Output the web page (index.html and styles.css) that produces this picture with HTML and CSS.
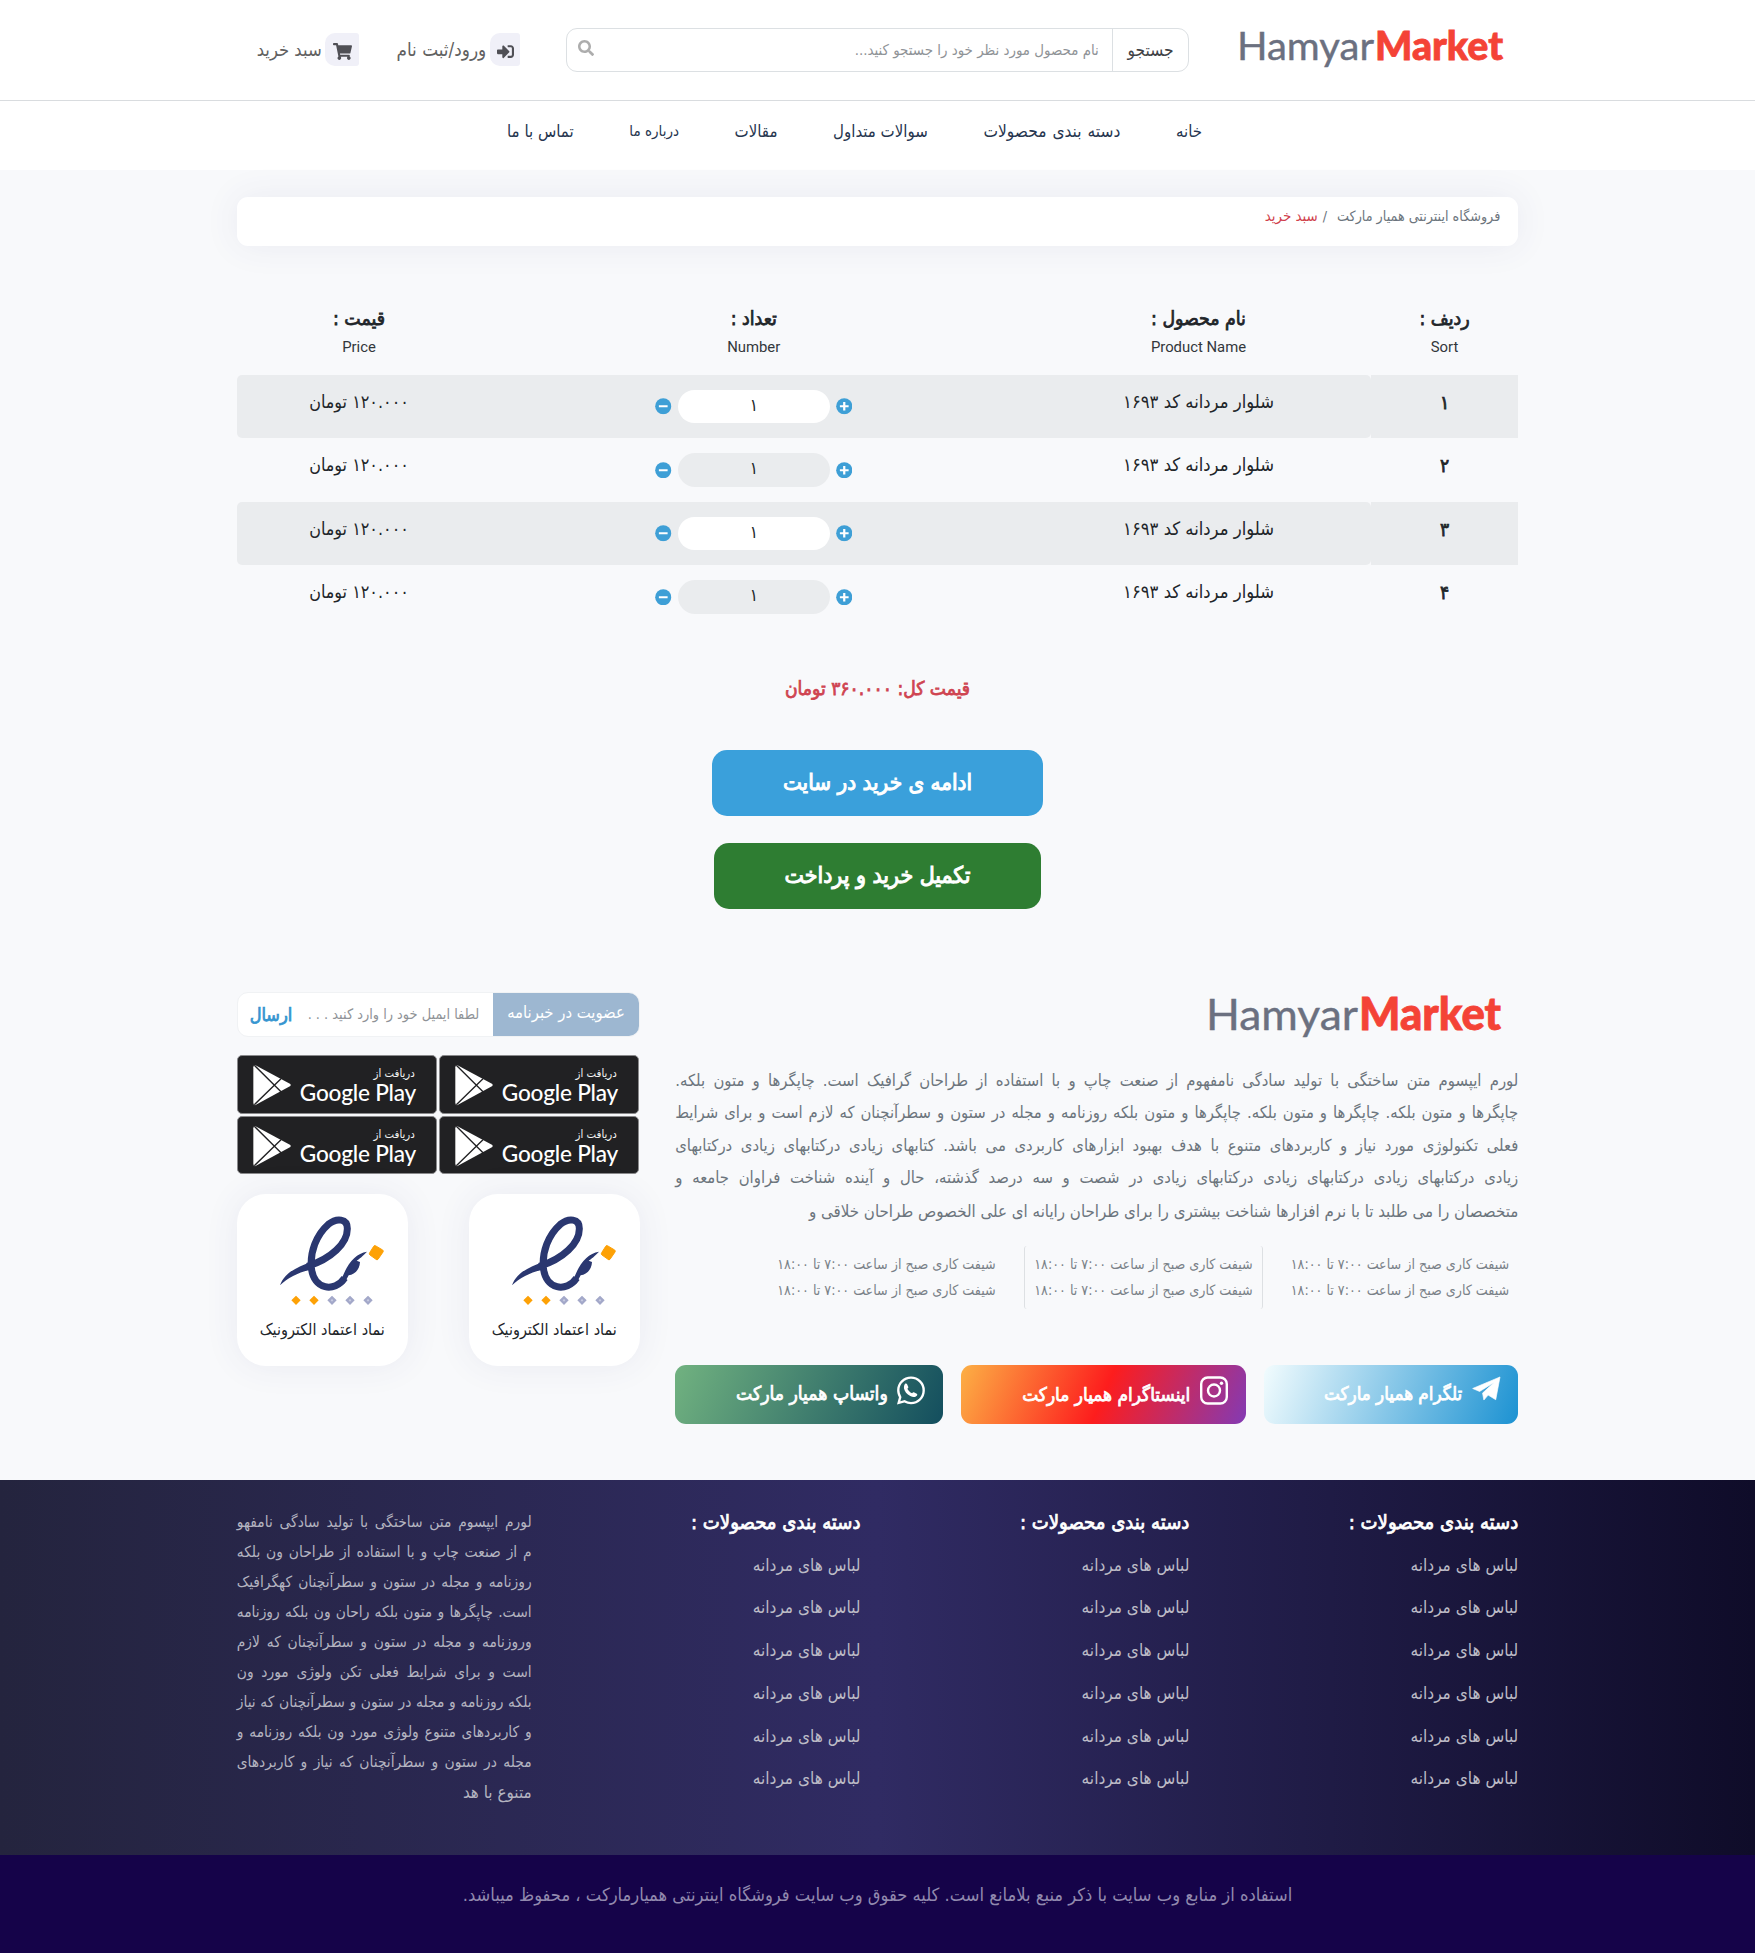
FILE: index.html
```html
<!DOCTYPE html>
<html lang="fa" dir="rtl">
<head>
<meta charset="utf-8">
<title>HamyarMarket</title>
<link rel="stylesheet" href="styles.css">
</head>
<body>
<svg class="sprite" width="0" height="0" aria-hidden="true">
  <symbol id="plus" viewBox="0 0 17 17"><circle cx="8.500" cy="8.500" r="8.300" fill="#3e9fd6"/><path d="M8.500 4v9M4 8.500h9" stroke="#fff" stroke-width="2.300"/></symbol>
  <symbol id="minus" viewBox="0 0 17 17"><circle cx="8.500" cy="8.500" r="8.300" fill="#3e9fd6"/><path d="M4 8.500h9" stroke="#fff" stroke-width="2.300"/></symbol>
  <symbol id="play" viewBox="0 0 114 126"><path d="M6 3Q1 4 1 10V116Q1 122 6 124L112 66Q114 63 112 60Z" fill="#fff"/><path d="M4 4L84 83M4 122L84 44" stroke="#212123" stroke-width="4" fill="none"/></symbol>
  <symbol id="enamad" viewBox="180 740 320 270">
    <g fill="#2a3770"><path d="M180 948C196 904 240 892 272 877L284 898C246 905 206 922 180 948Z"/><path d="M362 938C378 888 404 852 441 847C426 862 419 868 410 874L420 878C419 902 404 915 386 918L372 944Z"/></g>
    <path d="M262 891C334 868 382 822 382 778C382 747 350 745 325 765C288 797 270 850 274 894C280 962 344 970 374 926" fill="none" stroke="#2a3770" stroke-width="21"/>
    <path d="M466 829L488 842Q491 845 489 848L474 870Q471 873 468 870L450 857Q446 854 449 850L461 831Q463 827 466 829Z" fill="#fda106" stroke="#fda106" stroke-width="3"/>
    <path d="M228 979l14 14-14 14-14-14zM282 979l14 14-14 14-14-14z" fill="#fda106"/>
    <path d="M336 979l14 14-14 14-14-14zM390 979l14 14-14 14-14-14zM444 979l14 14-14 14-14-14z" fill="#a3a8c9"/>
    <path d="M336 989l4 4-4 4-4-4zM390 989l4 4-4 4-4-4zM444 989l4 4-4 4-4-4z" fill="#c9cce2"/>
  </symbol>
</svg>

<header class="top">
  <div class="wrap top-row">
    <svg class="logo" viewBox="0 0 264 50" role="img"><text x="-3" y="35" class="logo-a" textLength="137" lengthAdjust="spacingAndGlyphs">Hamyar</text><text x="135" y="35" class="logo-b" textLength="128" lengthAdjust="spacingAndGlyphs">Market</text></svg>
    <div class="search">
      <span class="search-btn">جستجو</span>
      <span class="search-input">نام محصول مورد نظر خود را جستجو کنید...</span>
      <svg class="ic-search" viewBox="0 0 512 512"><path fill="#adadad" d="M505 442.700L405.300 343c-4.500-4.500-10.600-7-17-7H372c27.600-35.300 44-79.700 44-128C416 93.100 322.900 0 208 0S0 93.100 0 208s93.100 208 208 208c48.300 0 92.700-16.400 128-44v16.300c0 6.400 2.500 12.500 7 17l99.700 99.700c9.400 9.400 24.600 9.400 33.900 0l28.300-28.300c9.400-9.400 9.400-24.600.1-34zM208 336c-70.700 0-128-57.200-128-128 0-70.700 57.200-128 128-128 70.700 0 128 57.200 128 128 0 70.700-57.200 128-128 128z"/></svg>
    </div>
    <a class="action login"><span class="chip"><svg width="17" height="17" viewBox="0 0 512 512"><path fill="#4f4f55" d="M416 448h-84c-6.600 0-12-5.400-12-12v-40c0-6.600 5.400-12 12-12h84c17.700 0 32-14.300 32-32V160c0-17.700-14.300-32-32-32h-84c-6.600 0-12-5.400-12-12V76c0-6.600 5.400-12 12-12h84c53 0 96 43 96 96v192c0 53-43 96-96 96zm-47-201L201 79c-15-15-41-4.500-41 17v96H24c-13.300 0-24 10.700-24 24v96c0 13.300 10.700 24 24 24h136v96c0 21.500 26 32 41 17l168-168c9.300-9.400 9.300-24.600 0-34z"/></svg></span><span class="action-text">ورود/ثبت نام</span></a>
    <a class="action cart"><span class="chip chip-cart"><svg width="19" height="17" viewBox="0 0 576 512"><path fill="#4f4f55" d="M528.120 301.319l47.273-208C578.806 78.301 567.391 64 551.990 64H159.208l-9.166-44.810C147.758 8.021 137.930 0 126.529 0H24C10.745 0 0 10.745 0 24v16c0 13.255 10.745 24 24 24h69.883l70.248 343.435C147.325 417.100 136 435.222 136 456c0 30.928 25.072 56 56 56s56-25.072 56-56c0-15.674-6.447-29.835-16.824-40h209.647C430.447 426.165 424 440.326 424 456c0 30.928 25.072 56 56 56s56-25.072 56-56c0-22.172-12.888-41.332-31.579-50.405l5.517-24.276c3.413-15.018-8.002-29.319-23.403-29.319H218.117l-6.545-32h293.145c11.206 0 20.920-7.754 23.403-18.681z"/></svg></span><span class="action-text">سبد خرید</span></a>
  </div>
</header>
<nav class="nav"><a>خانه</a><a>دسته بندی محصولات</a><a>سوالات متداول</a><a>مقالات</a><a>درباره ما</a><a>تماس با ما</a></nav>

<main class="wrap">
  <div class="crumbs"><span>فروشگاه اینترنتی همیار مارکت</span><i>/</i><b>سبد خرید</b></div>

  <table class="basket">
    <thead><tr>
      <th class="c1">ردیف :<small>Sort</small></th><th class="c2">نام محصول :<small>Product Name</small></th><th class="c3">تعداد :<small>Number</small></th><th class="c4">قیمت :<small>Price</small></th>
    </tr></thead>
    <tbody>
      <tr class="odd"><td class="num">۱</td><td>شلوار مردانه کد ۱۶۹۳</td><td><div class="qty"><svg><use href="#plus"/></svg><span>۱</span><svg><use href="#minus"/></svg></div></td><td class="price">۱۲۰.۰۰۰ تومان</td></tr>
      <tr><td class="num">۲</td><td>شلوار مردانه کد ۱۶۹۳</td><td><div class="qty"><svg><use href="#plus"/></svg><span>۱</span><svg><use href="#minus"/></svg></div></td><td class="price">۱۲۰.۰۰۰ تومان</td></tr>
      <tr class="odd"><td class="num">۳</td><td>شلوار مردانه کد ۱۶۹۳</td><td><div class="qty"><svg><use href="#plus"/></svg><span>۱</span><svg><use href="#minus"/></svg></div></td><td class="price">۱۲۰.۰۰۰ تومان</td></tr>
      <tr><td class="num">۴</td><td>شلوار مردانه کد ۱۶۹۳</td><td><div class="qty"><svg><use href="#plus"/></svg><span>۱</span><svg><use href="#minus"/></svg></div></td><td class="price">۱۲۰.۰۰۰ تومان</td></tr>
    </tbody>
  </table>

  <p class="total">قیمت کل: ۳۶۰.۰۰۰ تومان</p>
  <div class="buttons"><a class="btn btn-blue">ادامه ی خرید در سایت</a><a class="btn btn-green">تکمیل خرید و پرداخت</a></div>

  <section class="about">
    <div class="about-main">
      <svg class="logo2" viewBox="0 0 293 53" role="img"><text x="-2" y="38" class="logo-a" textLength="152" lengthAdjust="spacingAndGlyphs">Hamyar</text><text x="151" y="38" class="logo-b" textLength="142" lengthAdjust="spacingAndGlyphs">Market</text></svg>
      <div class="lorem">
        <p>لورم ایپسوم متن ساختگی با تولید سادگی نامفهوم از صنعت چاپ و با استفاده از طراحان گرافیک است. چاپگرها و متون بلکه.</p>
        <p>چاپگرها و متون بلکه. چاپگرها و متون بلکه. چاپگرها و متون بلکه روزنامه و مجله در ستون و سطرآنچنان که لازم است و برای شرایط</p>
        <p>فعلی تکنولوژی مورد نیاز و کاربردهای متنوع با هدف بهبود ابزارهای کاربردی می باشد. کتابهای زیادی درکتابهای زیادی درکتابهای</p>
        <p>زیادی درکتابهای زیادی درکتابهای زیادی درکتابهای زیادی در شصت و سه درصد گذشته، حال و آینده شناخت فراوان جامعه و</p>
        <p>متخصصان را می طلبد تا با نرم افزارها شناخت بیشتری را برای طراحان رایانه ای علی الخصوص طراحان خلاقی و</p>
      </div>
      <div class="shifts">
        <div><p>شیفت کاری صبح از ساعت ۷:۰۰ تا ۱۸:۰۰</p><p>شیفت کاری صبح از ساعت ۷:۰۰ تا ۱۸:۰۰</p></div>
        <div><p>شیفت کاری صبح از ساعت ۷:۰۰ تا ۱۸:۰۰</p><p>شیفت کاری صبح از ساعت ۷:۰۰ تا ۱۸:۰۰</p></div>
        <div><p>شیفت کاری صبح از ساعت ۷:۰۰ تا ۱۸:۰۰</p><p>شیفت کاری صبح از ساعت ۷:۰۰ تا ۱۸:۰۰</p></div>
      </div>
      <div class="social">
        <a class="tg"><svg width="29" height="25" viewBox="1115 445 88 74"><path fill="#fff" stroke="#fff" stroke-width="2" stroke-linejoin="round" d="M1117 482L1200 447L1187 516L1164 502L1151 517L1147 496L1182 464L1138 491Z"/></svg><span>تلگرام همیار مارکت</span></a>
        <a class="ig"><svg width="28" height="29" viewBox="0 0 28 29" fill="none" stroke="#fff" stroke-width="2.400"><rect x="1.200" y="1.500" width="25.600" height="26" rx="6.500"/><circle cx="14" cy="14.500" r="6"/><circle cx="21.500" cy="7.200" r="1.700" fill="#fff" stroke="none"/></svg><span>اینستاگرام همیار مارکت</span></a>
        <a class="wa"><svg width="28" height="29" viewBox="0 0 16 16"><path fill="#fff" d="M13.601 2.326A7.854 7.854 0 0 0 7.994 0C3.627 0 .068 3.558.064 7.926c0 1.399.366 2.760 1.057 3.965L0 16l4.204-1.102a7.933 7.933 0 0 0 3.790.965h.004c4.368 0 7.926-3.558 7.930-7.930A7.898 7.898 0 0 0 13.600 2.326zM7.994 14.521a6.573 6.573 0 0 1-3.356-.920l-.240-.144-2.494.654.666-2.433-.156-.251a6.560 6.560 0 0 1-1.007-3.505c0-3.626 2.957-6.584 6.591-6.584a6.560 6.560 0 0 1 4.660 1.931 6.557 6.557 0 0 1 1.928 4.660c-.004 3.639-2.961 6.592-6.592 6.592z"/><path fill="#fff" d="M4.600 4.200c.4-.4.9-.3 1.100.1l.7 1.500c.2.400 0 .7-.5 1.200.5 1.100 1.500 2 2.700 2.600.5-.6.8-.8 1.300-.5l1.400.8c.4.300.4.700 0 1.100-.8.9-2.100 1-3.700.2-2-1.100-3.300-2.800-3.600-4.400-.1-1 .1-2 .6-2.600z"/></svg><span>واتساپ همیار مارکت</span></a>
      </div>
    </div>

    <aside class="side">
      <div class="news"><span class="news-label">عضویت در خبرنامه</span><span class="news-input">لطفا ایمیل خود را وارد کنید . . .</span><b>ارسال</b></div>
      <div class="stores">
        <a><svg class="tri"><use href="#play"/></svg><span class="st"><small>دریافت از</small><em>Google Play</em></span></a>
        <a><svg class="tri"><use href="#play"/></svg><span class="st"><small>دریافت از</small><em>Google Play</em></span></a>
        <a><svg class="tri"><use href="#play"/></svg><span class="st"><small>دریافت از</small><em>Google Play</em></span></a>
        <a><svg class="tri"><use href="#play"/></svg><span class="st"><small>دریافت از</small><em>Google Play</em></span></a>
      </div>
      <div class="trust">
        <div><svg><use href="#enamad"/></svg><p>نماد اعتماد الکترونیک</p></div>
        <div><svg><use href="#enamad"/></svg><p>نماد اعتماد الکترونیک</p></div>
      </div>
    </aside>
  </section>
</main>

<footer class="foot">
  <div class="wrap foot-row">
    <ul><li class="h">دسته بندی محصولات :</li><li>لباس های مردانه</li><li>لباس های مردانه</li><li>لباس های مردانه</li><li>لباس های مردانه</li><li>لباس های مردانه</li><li>لباس های مردانه</li></ul>
    <ul><li class="h">دسته بندی محصولات :</li><li>لباس های مردانه</li><li>لباس های مردانه</li><li>لباس های مردانه</li><li>لباس های مردانه</li><li>لباس های مردانه</li><li>لباس های مردانه</li></ul>
    <ul><li class="h">دسته بندی محصولات :</li><li>لباس های مردانه</li><li>لباس های مردانه</li><li>لباس های مردانه</li><li>لباس های مردانه</li><li>لباس های مردانه</li><li>لباس های مردانه</li></ul>
    <div class="foot-text">
      <p>لورم ایپسوم متن ساختگی با تولید سادگی نامفهو</p><p>م از صنعت چاپ و با استفاده از طراحان ون بلکه</p><p>روزنامه و مجله در ستون و سطرآنچنان کهگرافیک</p><p>است. چاپگرها و متون بلکه راحان ون بلکه روزنامه</p><p>وروزنامه و مجله در ستون و سطرآنچنان که لازم</p><p>است و برای شرایط فعلی تکن ولوژی مورد ون</p><p>بلکه روزنامه و مجله در ستون و سطرآنچنان که نیاز</p><p>و کاربردهای متنوع ولوژی مورد ون بلکه روزنامه و</p><p>مجله در ستون و سطرآنچنان که نیاز و کاربردهای</p><p>متنوع با هد</p>
    </div>
  </div>
</footer>
<div class="copy">استفاده از منابع وب سایت با ذکر منبع بلامانع است. کلیه حقوق وب سایت فروشگاه اینترنتی همیارمارکت ، محفوظ میباشد.</div>
</body>
</html>
```
FILE: styles.css
```css
* { box-sizing: border-box; }
body, p, ul { margin: 0; padding: 0; }
body {
  background: #f8f9fb;
  color: #212529;
  font-family: "DejaVu Sans Condensed", "DejaVu Sans", sans-serif;
  font-size: 16px;
  white-space: nowrap;
}
ul { list-style: none; }
svg { flex: none; display: block; direction: ltr; }
.sprite { position: absolute; }
.wrap { width: 1281.500px; margin: 0 auto; }

/* semi-bold headings: regular weight with a thin outline */
th, .num, .total, .btn, .social span, .foot .h, .news b {
  font-weight: 400;
  -webkit-text-stroke: .75px currentColor;
}

/* header */
.top { background: #fff; height: 100.500px; border-bottom: 1px solid #d9dcdf; }
.top-row { display: flex; align-items: flex-start; height: 99px; }
.logo { width: 264px; height: 50px; margin: 24.500px 14px 0 51px; overflow: visible; }
.logo-a { font: 400 39.500px Lato, sans-serif; fill: #6b7080; stroke: #6b7080; stroke-width: .4px; }
.logo-b { font: 900 40.500px Lato, sans-serif; fill: #f44336; stroke: #f44336; stroke-width: .8px; }
.search {
  width: 623.500px; height: 44px; margin-top: 28px;
  display: flex; align-items: center;
  border: 1.500px solid #dce0e3; border-radius: 11px;
}
.search-btn {
  width: 76.500px; height: 100%; line-height: 43px; text-align: center;
  border-left: 1px solid #dce0e3; color: #3f4246; font-size: 17.200px;
}
.search-input { flex: 1; padding-right: 13px; font-size: 14.900px; color: #8f9397; }
.ic-search { width: 16px; height: 16px; margin: 0 0 4px 11px; }
.action { display: flex; align-items: center; margin-top: 33px; height: 33px; color: #616161; }
.login { margin-right: 45.500px; }
.cart { margin-right: 36px; }
.chip {
  width: 30px; height: 33px; background: #f0f0f8; border-radius: 10px 3px 3px 10px;
  display: flex; align-items: center; justify-content: center; padding-top: 3px;
}
.chip-cart { width: 34px; }
.action-text { font-size: 18.300px; margin-right: 3.500px; }
.login .action-text { width: 91px; margin-right: 4px; font-size: 18.800px; }

/* navigation */
.nav {
  height: 69px; background: #fff; padding: 0 553px 9px 507px;
  display: flex; justify-content: space-between; align-items: center;
  color: #27364f; font-size: 16.700px;
}
.nav a:nth-child(2) { font-size: 17.200px; word-spacing: 1px; }
.nav a:nth-child(5) { font-size: 15px; }

/* breadcrumb */
.crumbs {
  height: 49px; margin: 27.500px 0 38px; padding: 5px 18px 0 0; line-height: 28px;
  background: #fff; border-radius: 11px; box-shadow: 0 0 35px rgba(60, 70, 130, .08);
  font-size: 14.200px; color: #6c757d; display: flex;
}
.crumbs i { font-style: normal; margin: 0 10px 0 5px; }
.crumbs b { font-weight: 400; color: #d0414c; font-size: 14.900px; }

/* basket */
.basket { width: 100%; border-collapse: separate; border-spacing: 0; table-layout: fixed; text-align: center; }
.c1 { width: 147.500px; } .c2 { width: 344.500px; } .c3 { width: 545px; }
th { height: 90.500px; padding: 20.500px 0 0; vertical-align: top; line-height: 28px; font-size: 19.300px; }
small { display: block; font: 400 14.870px/29px Roboto, sans-serif; color: #33373b; -webkit-text-stroke: 0; }
.basket td { height: 63.500px; padding: 0; vertical-align: top; line-height: 54.500px; font-size: 18.300px; }
.basket .num { font-size: 19px; }
.basket .price { font-size: 17.800px; }
.odd td { background: #eaecee; }
.odd td:nth-child(2) { border-radius: 0 5px 5px 0; }
.odd td:nth-child(4) { border-radius: 5px 0 0 5px; }
.qty { display: flex; justify-content: center; align-items: center; gap: 6px; height: 63px; padding-top: 1px; }
.qty svg { width: 16.500px; height: 16.500px; }
.qty span { width: 152px; height: 33.500px; line-height: 31px; border-radius: 17px; background: #eaecee; font-size: 17px; }
.odd .qty span { background: #fff; }

.total { margin: 45px 0 46px; line-height: 30px; text-align: center; font-size: 19.100px; color: #cf4450; }
.buttons { display: flex; flex-direction: column; align-items: center; gap: 27.500px; }
.btn { height: 66px; line-height: 65px; border-radius: 15px; text-align: center; color: #fff; font-size: 22.300px; -webkit-text-stroke-width: 1px; }
.btn-blue { width: 331px; background: #3aa0db; }
.btn-green { width: 327.500px; background: #2e7d32; font-size: 22.900px; }

/* about */
.about { display: flex; gap: 35.500px; margin-top: 83px; height: 488px; }
.about-main { width: 843px; }
.logo2 { width: 293px; height: 53px; margin-right: 17px; overflow: visible; }
.logo2 .logo-a { font-size: 43px; }
.logo2 .logo-b { font-size: 45px; }
.lorem { margin-top: 20px; color: #6c757d; }
.lorem p { font-size: 16.500px; line-height: 32.400px; text-align: justify; text-align-last: justify; }
.lorem p:last-child { text-align-last: auto; font-size: 16.750px; line-height: 32px; }
.shifts { display: flex; height: 63px; margin-top: 19.500px; color: #7a8188; font-size: 14.130px; line-height: 25.500px; }
.shifts div { padding: 6px 9px 0 0; width: 255.500px; }
.shifts div:nth-child(2) { width: 238.500px; border: solid #dde0e3; border-width: 0 1px; border-radius: 3px; }
.shifts div:nth-child(3) { padding-right: 28.500px; }
.social { display: flex; gap: 18px; margin-top: 56px; }
.social a { height: 59px; border-radius: 11px; display: flex; color: #fff; font-size: 18.700px; padding-top: 11px; }
.social span { line-height: 36px; margin-right: 10px; }
.tg { width: 254px; padding-right: 17px; background: linear-gradient(290deg, #1c92d2, #f2fcfe); }
.ig { width: 285.500px; padding-right: 18px; background: linear-gradient(293deg, #833ab4, #fd1d1d 50%, #fcb045); }
.wa { width: 267.500px; padding-right: 18px; background: linear-gradient(293deg, #134e5e, #71b280); }
.social .ig span { font-size: 18.900px; }
.social .wa span { font-size: 19.200px; margin-right: 9px; }

.side { width: 403px; }
.news { display: flex; align-items: center; height: 44.500px; background: #fff; border-radius: 11px; overflow: hidden; border: 1px solid #f0f2f4; }
.news-label { width: 145.500px; height: 44.500px; line-height: 41px; text-align: center; background: #9db7d1; color: #fff; font-size: 16.500px; }
.news-input { width: 201px; padding-right: 14px; font-size: 14.400px; color: #8f9397; }
.news b { color: #3595d0; font-size: 18px; }
.stores { display: grid; grid-template-columns: 200px 200.500px; gap: 2px 1.500px; margin-top: 18.500px; padding-right: 1px; }
.stores a {
  height: 58.500px; background: #212123; border: 1px solid #8a8a8c; border-radius: 5px;
  display: flex; direction: ltr; padding: 8px 0 0 15px; color: #fff;
}
.tri { width: 38px; height: 42px; }
.st { margin-left: 9px; width: 118px; }
.st small { font: 400 11.300px/19px "DejaVu Sans Condensed", sans-serif; color: #f2f2f2; text-align: right; direction: rtl; padding-right: 3px; }
.st em { display: block; font: 500 22.600px/19px Lato, sans-serif; letter-spacing: -.200px; }
.trust { display: flex; justify-content: space-between; margin-top: 20px; }
.trust div { width: 171px; height: 172px; background: #fff; border-radius: 29px; box-shadow: 0 0 35px rgba(60, 70, 130, .08); text-align: center; padding-top: 22px; }
.trust svg { width: 106.700px; height: 90px; margin: 0 auto 0 43px; }
.trust p { font-size: 16px; line-height: 28px; margin-top: 10px; }

/* footer */
.foot { height: 375px; background: linear-gradient(to right, #24243e, #302b63, #0f0c29); }
.foot-row { display: flex; padding-top: 22.500px; }
.foot ul { width: 329px; color: #bcbbc6; font-size: 17.100px; line-height: 42.800px; }
.foot .h { color: #fff; line-height: 38px; font-size: 20.100px; margin-bottom: 3px; }
.foot-text { width: 295px; color: #b4b4c0; font-size: 15.400px; line-height: 30px; padding-top: 4px; }
.foot-text p { text-align: justify; text-align-last: justify; }
.foot-text p:last-child { text-align-last: auto; font-size: 16.900px; }
.copy { height: 98.500px; line-height: 79px; background: #150349; color: #9189ae; text-align: center; font-size: 18.180px; }
```
